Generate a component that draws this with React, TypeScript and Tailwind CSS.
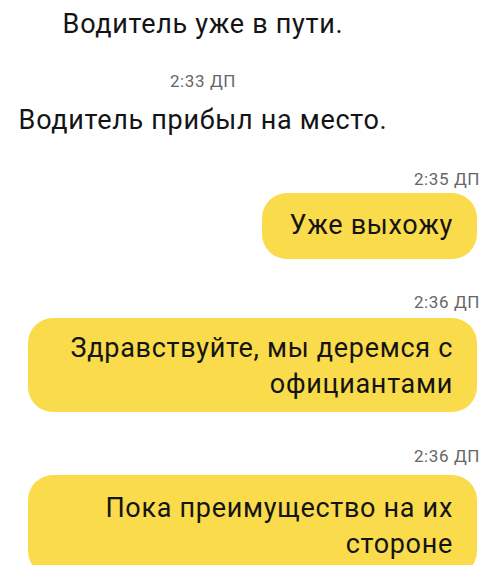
const font = { fontFamily: 'Roboto, "Noto Sans", Arial, sans-serif' }

function Stamp({ time, className }: { time: string; className: string }) {
  return <div className={`text-right pr-[2px] text-[17px] leading-[20px] tracking-[0.6px] text-[#666666] ${className}`}>{time}</div>
}

function Bubble({ text, className }: { text: string; className: string }) {
  return (
    <div className="flex justify-end pr-[5px] pl-[28px]">
      <div className={`bg-[#f9db4b] rounded-[25px] text-right text-[27px] leading-[36px] tracking-[0.7px] text-[#141414] pr-[24px] ${className}`}>
        {text}
      </div>
    </div>
  )
}

export default function App() {
  return (
    <div className="w-[482px] h-[565px] overflow-hidden bg-white" style={font}>
      <div className="w-[406px] text-center text-[27px] leading-[36px] tracking-[0.7px] text-[#141414]">
        <div className="pt-[6px]">Водитель уже в пути.</div>
        <div className="mt-[29px] text-[17px] leading-[20px] tracking-[0.6px] text-[#666666]">2:33 ДП</div>
        <div className="mt-[11px]">Водитель прибыл на место.</div>
      </div>

      <Stamp time="2:35 ДП" className="mt-[31px]" />
      <div className="mt-[4px]">
        <Bubble text="Уже выхожу" className="pl-[27px] pt-[14px] pb-[16px]" />
      </div>

      <Stamp time="2:36 ДП" className="mt-[33px]" />
      <div className="mt-[6px]">
        <Bubble text="Здравствуйте, мы деремся с официантами" className="pl-[16px] pt-[12px] pb-[10px]" />
      </div>

      <Stamp time="2:36 ДП" className="mt-[34px]" />
      <div className="mt-[9px]">
        <Bubble text="Пока преимущество на их стороне" className="pl-[16px] pt-[15px] pb-[14px]" />
      </div>
    </div>
  )
}
